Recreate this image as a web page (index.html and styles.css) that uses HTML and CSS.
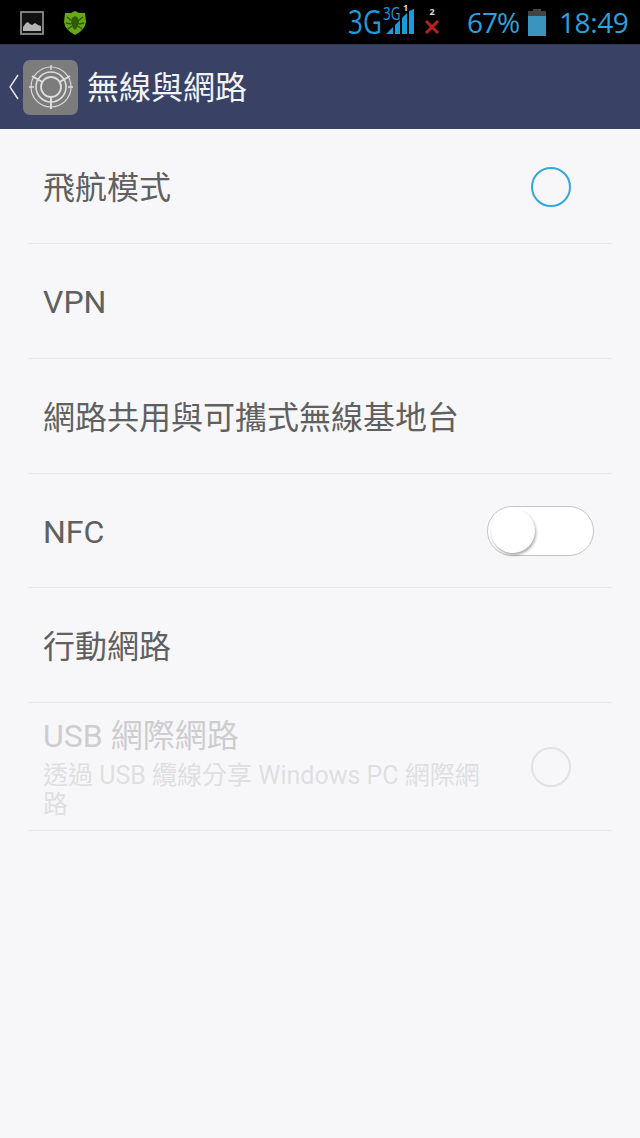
FILE: index.html
```html
<!DOCTYPE html>
<html lang="zh-Hant">
<head>
  <meta charset="UTF-8">
  <meta name="viewport" content="width=device-width, initial-scale=1.0">
  <title>無線與網路</title>
  <link rel="stylesheet" href="styles.css">
</head>
<body>

  <div class="status-bar">
    <div class="status-left">
      <svg width="24" height="24" viewBox="0 0 24 24">
        <rect x="1" y="1" width="22" height="22" fill="#111" stroke="#8c8c8c" stroke-width="1.8"/>
        <path d="M3 20 V16 L6 12 Q8 10 10 13 L12 14 L15 12 L18 14 L21 15 V20 Z" fill="#b4b4b4"/>
      </svg>
      <svg width="24" height="26" viewBox="0 0 24 26">
        <path d="M12 1 L16 3 L22 3 L23 12 Q22 20 12 25 Q2 20 1 12 L2 3 L8 3 Z" fill="#66a816"/>
        <path d="M12 6 L15 8 L16 13 L14 18 L12 20 L10 18 L8 13 L9 8 Z" fill="#2f5a08"/>
        <path d="M4 7 L9 11 M20 7 L15 11 M3 13 L8 14 M21 13 L16 14 M5 19 L9 16 M19 19 L15 16" stroke="#2f5a08" stroke-width="1.5"/>
      </svg>
    </div>
    <div class="status-right">
      <div class="net-big"><span>3G</span></div>
      <div class="signal">
        <span class="net-small">3G</span>
        <span class="sim-num sim-one">1</span>
        <svg width="30" height="30" viewBox="0 0 30 30">
          <path d="M0 28 L7 21 V28 Z M9 28 V19 L14 14 V28 Z M16 28 V12 L21 7 V28 Z M23 28 V5 L28 3 V28 Z" fill="#1a9bdc"/>
        </svg>
      </div>
      <div class="sim-two">
        <span class="sim-num">2</span>
        <svg width="16" height="14" viewBox="0 0 16 14">
          <path d="M2 1 L14 13 M14 1 L2 13" stroke="#b8201c" stroke-width="3"/>
        </svg>
      </div>
      <span class="battery-pct">67%</span>
      <div class="battery">
        <div class="battery-cap"></div>
        <div class="battery-empty"></div>
        <div class="battery-fill"></div>
      </div>
      <span class="clock">18:49</span>
    </div>
  </div>

  <div class="action-bar">
    <svg class="back" width="12" height="28" viewBox="0 0 12 28">
      <path d="M10 2 L2 14 L10 26" fill="none" stroke="#e6e8ef" stroke-width="1.4"/>
    </svg>
    <div class="app-icon">
      <svg width="50" height="50" viewBox="0 0 50 50" fill="none" stroke="#dcdcdc">
        <circle cx="25" cy="25" r="20" stroke-width="1.2"/>
        <circle cx="25" cy="25" r="15" stroke-width="1.6"/>
        <circle cx="25" cy="25" r="10" stroke-width="1.8"/>
        <path d="M25 35 V47 M16.3 20 L6 14 M33.7 20 L44 14" stroke-width="2"/>
        <path d="M25 3 V8 M3 25 H8 M42 25 H47" stroke-width="1.4"/>
      </svg>
    </div>
    <h1>無線與網路</h1>
  </div>

  <div class="settings-list">
    <div class="row">
      <span class="row-title row-cjk">飛航模式</span>
      <div class="radio"></div>
    </div>
    <div class="row">
      <span class="row-title row-latin">VPN</span>
    </div>
    <div class="row">
      <span class="row-title row-cjk">網路共用與可攜式無線基地台</span>
    </div>
    <div class="row row-nfc">
      <span class="row-title row-latin">NFC</span>
      <div class="switch"><div class="knob"></div></div>
    </div>
    <div class="row">
      <span class="row-title row-cjk">行動網路</span>
    </div>
    <div class="row row-disabled">
      <div class="row-text">
        <div class="row-title">USB 網際網路</div>
        <div class="row-summary">透過 USB 纜線分享 Windows PC 網際網路</div>
      </div>
      <div class="radio"></div>
    </div>
  </div>

</body>
</html>
```

FILE: styles.css
```css
body {
  font-family: Roboto, "Noto Sans CJK TC", sans-serif;
  background-color: #f7f7fa;
  margin: 0;
  height: 1138px;
  overflow: hidden;
}

/* status bar */
.status-bar {
  height: 44px;
  background-color: #000;
  display: flex;
  justify-content: space-between;
  align-items: center;
}

.status-left {
  display: flex;
  align-items: center;
  gap: 19px;
  padding-left: 20px;
  padding-top: 2px;
}

.status-right {
  display: flex;
  align-items: center;
  padding-right: 11px;
  color: #2aa3dc;
  font-family: "Open Sans", sans-serif;
}

.net-big {
  width: 34px;
  font-size: 33px;
  line-height: 44px;
  color: #1a9bdc;
}

.net-big span {
  display: inline-block;
  transform: scaleX(0.79);
  transform-origin: left center;
}

.signal {
  position: relative;
  width: 33px;
  height: 44px;
  margin-left: 1px;
}

.signal svg {
  position: absolute;
  left: 3px;
  top: 6px;
}

.net-small {
  position: absolute;
  left: 0;
  top: 3px;
  font-size: 18px;
  line-height: 20px;
  color: #1a9bdc;
  transform: scaleX(0.75);
  transform-origin: left center;
}

.sim-num {
  color: #ddd;
  font-size: 9px;
  font-weight: bold;
  line-height: 10px;
}

.sim-one {
  position: absolute;
  left: 20px;
  top: 3px;
}

.sim-two {
  width: 16px;
  margin-left: 8px;
  display: flex;
  flex-direction: column;
  align-items: center;
  gap: 3px;
  align-self: flex-start;
  padding-top: 7px;
}

.battery-pct {
  width: 52px;
  font-size: 28px;
  letter-spacing: -1px;
  margin-left: 27px;
  white-space: nowrap;
}

.battery {
  width: 18px;
  height: 27px;
  margin-left: 9px;
  margin-top: 1px;
  display: flex;
  flex-direction: column;
  align-items: center;
}

.battery-cap {
  width: 8px;
  height: 2px;
  background-color: #444;
}

.battery-empty {
  width: 100%;
  height: 5px;
  background-color: #444;
}

.battery-fill {
  width: 100%;
  flex: 1;
  background-color: #3a94bd;
}

.clock {
  width: 70px;
  font-size: 28px;
  letter-spacing: -0.4px;
  margin-left: 13px;
}

/* action bar */
.action-bar {
  height: 84px;
  background-color: #394265;
  border-top: 1px solid #2f3653;
  display: flex;
  align-items: center;
  padding-left: 8px;
}

.back {
  margin-right: 3px;
}

.app-icon {
  width: 55px;
  height: 55px;
  background-color: #7c7c7c;
  border-radius: 7px;
  display: flex;
  align-items: center;
  justify-content: center;
}

h1 {
  margin: 0 0 0 9px;
  padding-bottom: 4px;
  font-size: 32px;
  font-weight: normal;
  color: #f2f3f7;
}

/* settings rows */
.settings-list {
  padding: 0 28px;
}

.row {
  height: 114px;
  border-bottom: 1px solid #e8e8ec;
  display: flex;
  align-items: center;
  justify-content: space-between;
  padding: 0 18px 0 15px;
}

.row-nfc {
  height: 113px;
}

.row-title {
  font-size: 32px;
  color: #606060;
}

.row-cjk {
  padding-bottom: 3px;
}

.row-latin {
  padding-top: 2px;
}

.radio {
  width: 36px;
  height: 36px;
  border: 2px solid #35a7e0;
  border-radius: 50%;
  margin-right: 23px;
  margin-top: 2px;
}

.switch {
  width: 105px;
  height: 48px;
  border: 1px solid #c4c4c8;
  border-radius: 25px;
  background-color: #fff;
  margin-left: auto;
  position: relative;
}

.knob {
  position: absolute;
  left: 3px;
  top: 2px;
  width: 44px;
  height: 44px;
  border-radius: 50%;
  background-color: #fff;
  box-shadow: 1px 2px 3px rgba(0, 0, 0, 0.35);
}

.row-disabled {
  height: 127px;
}

.row-disabled .row-title {
  color: #cdcdcf;
  line-height: 40px;
  margin-bottom: 5px;
}

.row-text {
  width: 445px;
  padding-top: 1px;
}

.row-summary {
  font-size: 25px;
  line-height: 29px;
  color: #dfdfe1;
}

.row-disabled .radio {
  border-color: #e2e2e4;
  margin-top: 0;
}
```
